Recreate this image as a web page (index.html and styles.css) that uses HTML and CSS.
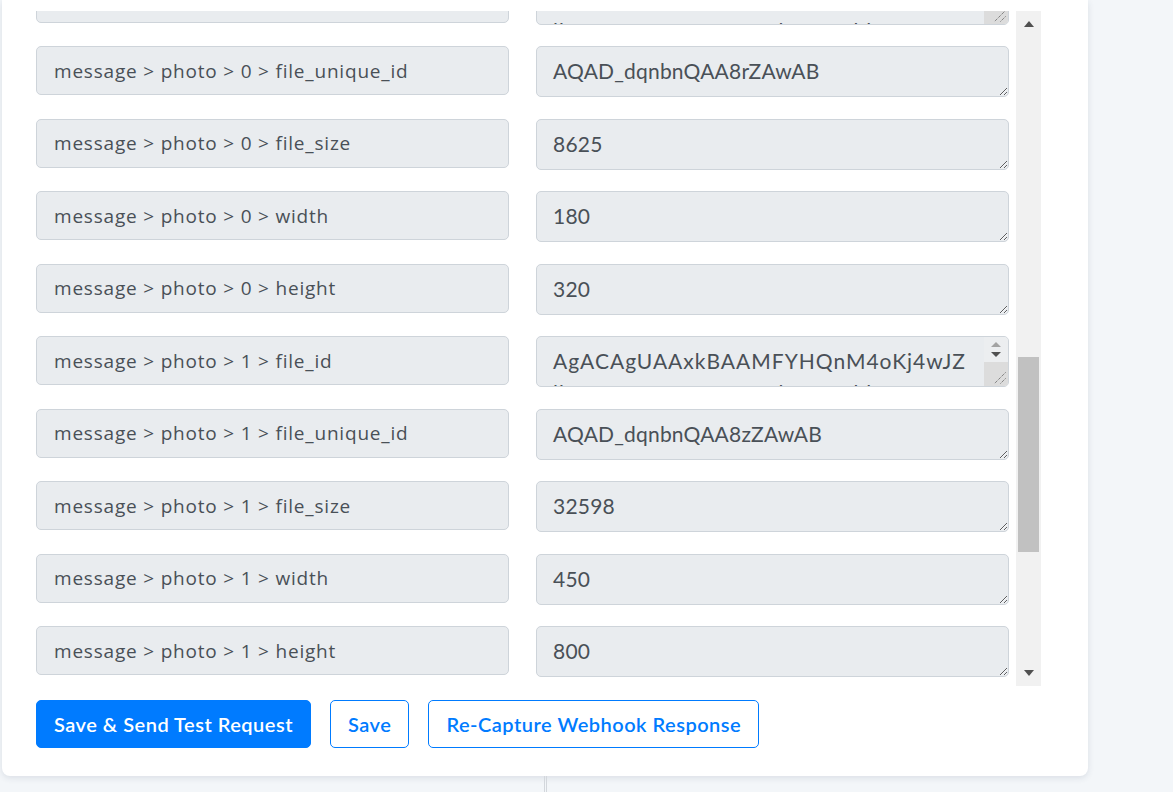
FILE: index.html
```html
<!DOCTYPE html>
<html lang="en">

<head>
    <meta charset="UTF-8">
    <meta name="viewport" content="width=device-width, initial-scale=1.0">
    <title>Webhook Response Mapping</title>
    <link rel="stylesheet" href="styles.css">
</head>

<body>
    <div class="mapping-card">

        <div class="fields-viewport">
            <div class="fields-list">
                <div class="field-label">message &gt; photo &gt; 0 &gt; file_id</div>
                <div class="value-wrap">
                    <textarea class="field-value long" readonly>AgACAgUAAxkBAAMFYHQnM4oKj4wJZ
lbUzqTRAAqSuMRt2nIlVpVRBhl8Kx
WAAQAMCAAN5AAMeBA</textarea>
                    <span class="value-scroll">
                        <span class="value-arrow up"></span>
                        <span class="value-arrow down"></span>
                        <span class="value-corner">
                            <svg width="24" height="24" viewBox="0 0 24 24">
                                <line x1="21.5" y1="10.5" x2="10.5" y2="21.5" />
                                <line x1="21.5" y1="16.5" x2="16.5" y2="21.5" />
                            </svg>
                        </span>
                    </span>
                </div>

                <div class="field-label">message &gt; photo &gt; 0 &gt; file_unique_id</div>
                <textarea class="field-value" readonly>AQAD_dqnbnQAA8rZAwAB</textarea>

                <div class="field-label">message &gt; photo &gt; 0 &gt; file_size</div>
                <textarea class="field-value" readonly>8625</textarea>

                <div class="field-label">message &gt; photo &gt; 0 &gt; width</div>
                <textarea class="field-value" readonly>180</textarea>

                <div class="field-label">message &gt; photo &gt; 0 &gt; height</div>
                <textarea class="field-value" readonly>320</textarea>

                <div class="field-label">message &gt; photo &gt; 1 &gt; file_id</div>
                <div class="value-wrap">
                    <textarea class="field-value long" readonly>AgACAgUAAxkBAAMFYHQnM4oKj4wJZ
lbUzqTRAAqSuMRt2nIlVpVRBhl8Kx
WAAQAMCAAN5AAMeBA</textarea>
                    <span class="value-scroll">
                        <span class="value-arrow up"></span>
                        <span class="value-arrow down"></span>
                        <span class="value-corner">
                            <svg width="24" height="24" viewBox="0 0 24 24">
                                <line x1="21.5" y1="10.5" x2="10.5" y2="21.5" />
                                <line x1="21.5" y1="16.5" x2="16.5" y2="21.5" />
                            </svg>
                        </span>
                    </span>
                </div>

                <div class="field-label">message &gt; photo &gt; 1 &gt; file_unique_id</div>
                <textarea class="field-value" readonly>AQAD_dqnbnQAA8zZAwAB</textarea>

                <div class="field-label">message &gt; photo &gt; 1 &gt; file_size</div>
                <textarea class="field-value" readonly>32598</textarea>

                <div class="field-label">message &gt; photo &gt; 1 &gt; width</div>
                <textarea class="field-value" readonly>450</textarea>

                <div class="field-label">message &gt; photo &gt; 1 &gt; height</div>
                <textarea class="field-value" readonly>800</textarea>
            </div>

            <div class="scroll-track">
                <span class="scroll-arrow up"></span>
                <div class="scroll-rail">
                    <div class="scroll-thumb"></div>
                </div>
                <span class="scroll-arrow down"></span>
            </div>
        </div>

        <div class="action-bar">
            <button class="btn btn-primary">Save &amp; Send Test Request</button>
            <button class="btn btn-outline">Save</button>
            <button class="btn btn-outline">Re-Capture Webhook Response</button>
        </div>
    </div>

    <div class="panel-split"></div>
</body>

</html>
```

FILE: styles.css
```css
body {
    margin: 0;
    height: 100vh;
    background: #f3f6f9;
    font-family: 'Lato', 'Open Sans', sans-serif;
    color: #495057;
    overflow: hidden;
}

.mapping-card {
    width: 1086px;
    margin-left: 2px;
    padding: 11px 0 28px 34px;
    box-sizing: border-box;
    background: #fff;
    border-radius: 0 0 8px 8px;
    box-shadow: 0 2px 6px rgba(40, 60, 90, 0.12);
}

.fields-viewport {
    display: flex;
    height: 675px;
    width: 1005px;
    overflow: hidden;
}

.fields-list {
    display: grid;
    grid-template-columns: 473px 473px;
    column-gap: 27px;
    row-gap: 21.5px;
    align-content: start;
    margin-top: -37.5px;
    padding-right: 7px;
}

.field-label {
    display: flex;
    align-items: center;
    height: 49px;
    box-sizing: border-box;
    padding: 0 17px;
    background: #e9ecef;
    border: 1px solid #ced4da;
    border-radius: 5px;
    font-family: 'Open Sans', sans-serif;
    font-size: 19px;
    letter-spacing: 0.8px;
}

.field-value {
    display: block;
    width: 473px;
    height: 51px;
    box-sizing: border-box;
    margin: 0;
    padding: 9px 16px 0;
    background: #e9ecef;
    border: 1px solid #ced4da;
    border-radius: 5px;
    font-family: inherit;
    font-size: 21px;
    line-height: 30px;
    letter-spacing: 0.2px;
    color: #495057;
    overflow: hidden;
    white-space: pre;
}

.field-value.long {
    padding: 8px 40px 0 16px;
    line-height: 32px;
    letter-spacing: 1px;
}

/* overflowing value: its own little scrollbar */
.value-wrap {
    position: relative;
}

.value-scroll {
    position: absolute;
    top: 1px;
    right: 1px;
    bottom: 1px;
    width: 24px;
    display: flex;
    flex-direction: column;
    align-items: center;
    background: #eceef0;
    border-radius: 0 4px 4px 0;
    overflow: hidden;
}

.value-arrow {
    width: 0;
    height: 0;
    border-left: 5px solid transparent;
    border-right: 5px solid transparent;
}

.value-arrow.up {
    margin-top: 5px;
    border-bottom: 5px solid #a3a3a3;
}

.value-arrow.down {
    margin-top: 5px;
    border-top: 5px solid #505050;
}

.value-corner {
    margin-top: auto;
    width: 100%;
    height: 24px;
    background: #dcdcdc;
}

.value-corner svg {
    display: block;
}

.value-corner line {
    stroke: #5a5a5a;
    stroke-width: 1;
    stroke-dasharray: 1 1;
}

/* list scrollbar */
.scroll-track {
    display: flex;
    flex-direction: column;
    align-items: center;
    width: 25px;
    flex-shrink: 0;
    background: #f1f1f1;
}

.scroll-arrow {
    width: 0;
    height: 0;
    border-left: 5.5px solid transparent;
    border-right: 5.5px solid transparent;
}

.scroll-arrow.up {
    margin: 10px 0 6px;
    border-bottom: 6px solid #505050;
}

.scroll-arrow.down {
    margin: 6px 0 10px;
    border-top: 6px solid #505050;
}

.scroll-rail {
    flex: 1;
    width: 100%;
}

.scroll-thumb {
    width: 21px;
    height: 195px;
    margin: 324px auto 0;
    background: #c1c1c1;
}

.action-bar {
    display: flex;
    gap: 19px;
    margin-top: 14px;
}

.btn {
    height: 48px;
    padding: 0 17px;
    border-radius: 5px;
    font-family: inherit;
    font-size: 20px;
    font-weight: 600;
    letter-spacing: 0.5px;
    cursor: pointer;
}

.btn-primary {
    background: #007bff;
    border: 1px solid #007bff;
    color: #fff;
}

.btn-outline {
    background: #fff;
    border: 1px solid #007bff;
    color: #007bff;
}

.panel-split {
    width: 1px;
    height: 16px;
    margin-left: 544px;
    border-left: 1px solid #d3d7dc;
    border-right: 1px solid #d3d7dc;
}
```
